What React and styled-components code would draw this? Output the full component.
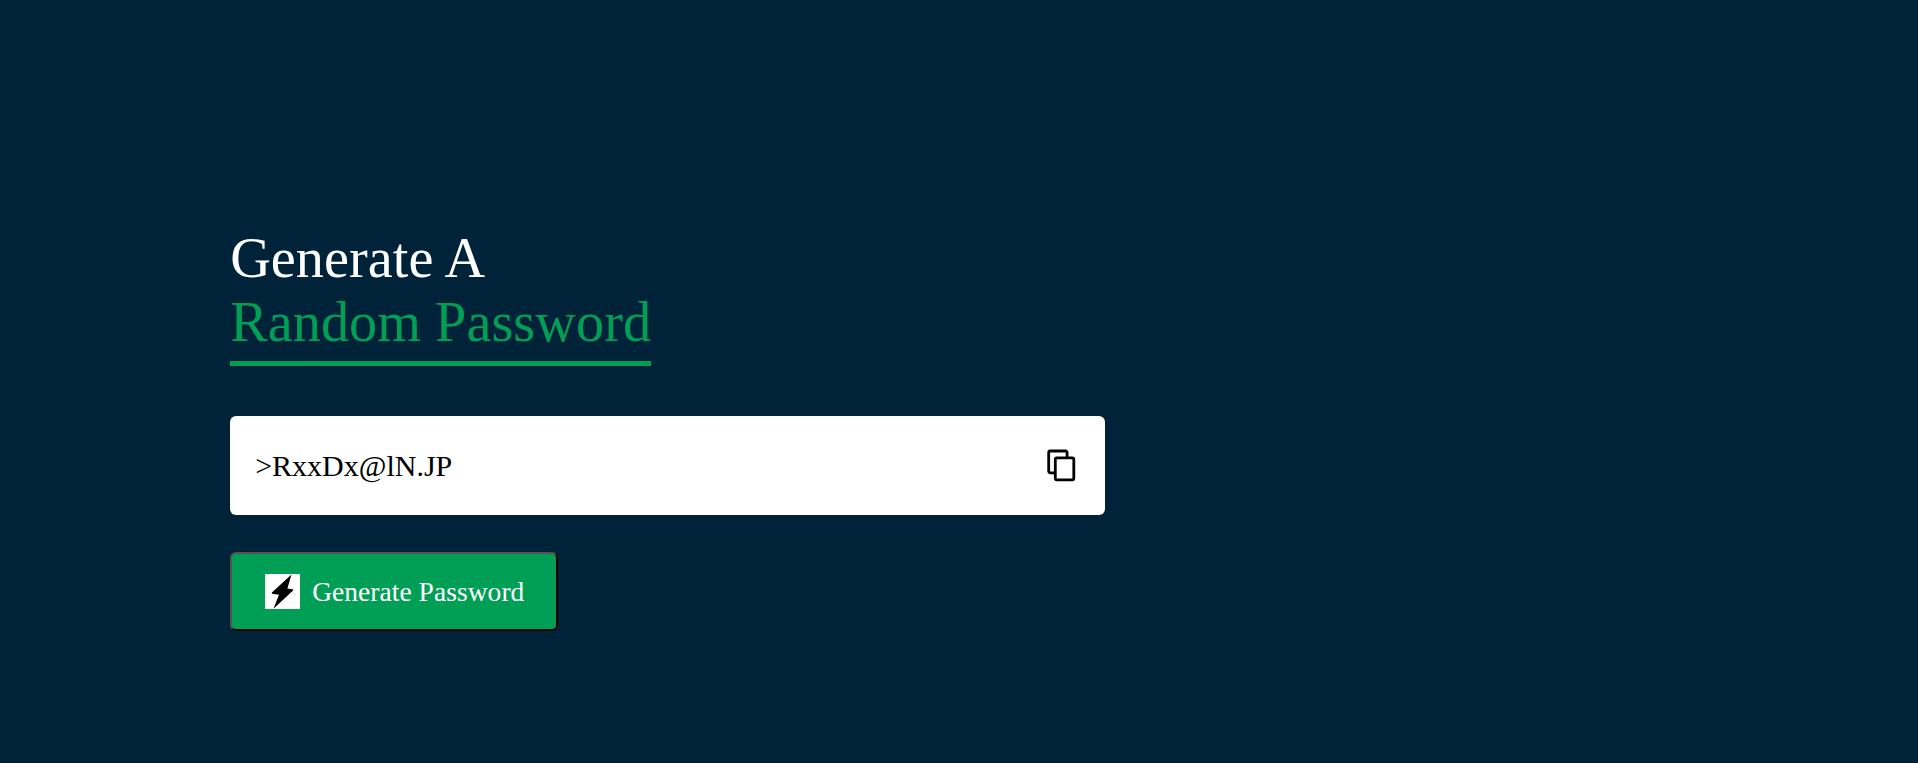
import React from "react";
import styled, { createGlobalStyle } from "styled-components";

const GlobalStyle = createGlobalStyle`
  * {
    margin: 0;
    padding: 0;
    box-sizing: border-box;
  }
  body {
    background: #002339;
    color: #fff;
    font-family: "Liberation Serif", "Times New Roman", serif;
  }
`;

const Page = styled.main`
  display: flow-root;
  min-height: 100vh;
  border-bottom: 1px solid #001d37;
`;

const Container = styled.section`
  width: 90%;
  max-width: 875px;
  margin: 226px 12% 0;
`;

const Title = styled.h1`
  font-size: 56.25px;
  font-weight: 500;
  line-height: 64px;
  letter-spacing: 0.04px;
`;

const Accent = styled.span`
  display: inline-block;
  color: #019f55;
  border-bottom: 5px solid #019f55;
  padding-bottom: 7px;
`;

const Display = styled.div`
  display: flex;
  align-items: center;
  justify-content: space-between;
  height: 99px;
  margin: 50px 0 37px;
  padding: 0 25px;
  background: #fff;
  border-radius: 6px;
`;

const PasswordInput = styled.input`
  flex: 1;
  min-width: 0;
  border: 0;
  outline: 0;
  background: transparent;
  color: #000;
  font: 30px "Liberation Serif", "Times New Roman", serif;
`;

const CopyIcon = styled.svg`
  width: 38px;
  height: 38px;
  cursor: pointer;
`;

const GenerateButton = styled.button`
  display: flex;
  align-items: center;
  gap: 12.5px;
  height: 79px;
  padding: 0 31.5px 0 32.5px;
  border: 2px outset #000;
  border-radius: 6px;
  background: #019f55;
  color: #fff;
  font: 27.5px "Liberation Serif", "Times New Roman", serif;
  letter-spacing: 0.04px;
  white-space: nowrap;
  cursor: pointer;
`;

const BoltIcon = styled.svg`
  width: 35px;
  height: 35px;
  background: #fff;
`;

export default function App() {
  return (
    <>
      <GlobalStyle />
      <Page>
        <Container>
          <Title>
            Generate A<br />
            <Accent>Random Password</Accent>
          </Title>
          <Display>
            <PasswordInput readOnly defaultValue=">RxxDx@lN.JP" aria-label="Password" />
            <CopyIcon viewBox="0 0 38 38" fill="none" stroke="#000" strokeWidth="2.8" strokeLinejoin="round">
              <path d="M13.3 25.8H8.2a1.5 1.5 0 0 1-1.5-1.5V5.5A1.5 1.5 0 0 1 8.2 4h15.4a1.5 1.5 0 0 1 1.5 1.5v5.4" />
              <rect x="13.3" y="10.9" width="18.5" height="21.9" rx="1.5" />
            </CopyIcon>
          </Display>
          <GenerateButton type="button">
            <BoltIcon viewBox="0 0 35 35">
              <path d="M26.5 0.5L6.6 18.8l.6 1 6.8 1L8.5 34.7 28.3 16.2l-.5-1-5.4-.6z" />
            </BoltIcon>
            Generate Password
          </GenerateButton>
        </Container>
      </Page>
    </>
  );
}
